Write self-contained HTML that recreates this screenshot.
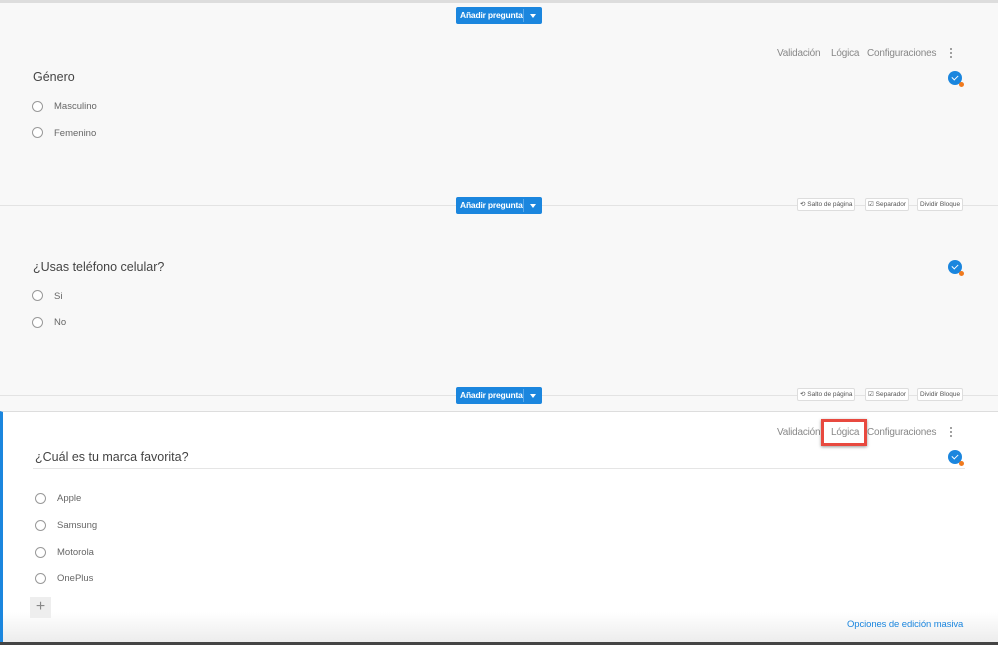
<!DOCTYPE html>
<html><head><meta charset="utf-8"><style>
*{margin:0;padding:0;box-sizing:border-box}
body{width:998px;height:645px;overflow:hidden;background:#f8f8f8;font-family:"Liberation Sans",sans-serif;position:relative;color:#555}
.a{position:absolute;white-space:nowrap}
.btn{position:absolute;height:17px;width:86px;background:#1b86de;border-radius:2px;color:#fff;font-size:8.5px;font-weight:bold;line-height:17px;letter-spacing:-0.2px}
.btn span{position:absolute;left:4px}
.btn i{position:absolute;left:67px;top:2px;bottom:2px;border-left:1px solid #5aa8ea}
.btn b{position:absolute;left:74px;top:7px;border-left:3px solid transparent;border-right:3px solid transparent;border-top:4px solid #fff}
.tabs{font-size:10px;color:#888;letter-spacing:-0.2px}
.title{font-size:12.5px;color:#444}
.radio{position:absolute;width:11px;height:11px;border:1px solid #999;border-radius:50%;background:#fff}
.lab{font-size:9.5px;color:#666}
.chk{position:absolute;width:14px;height:14px;border-radius:50%;background:#1b86de}
.chk:after{content:"";position:absolute;left:4px;top:3.5px;width:5px;height:3px;border-left:1.5px solid #fff;border-bottom:1.5px solid #fff;transform:rotate(-45deg)}
.chk:before{content:"";position:absolute;right:-2px;bottom:-2px;width:5px;height:5px;border-radius:50%;background:#f07a1e;z-index:1}
.dots{position:absolute;width:2px;height:12px;background:radial-gradient(circle,#999 1px,transparent 1.2px) 0 0/2px 4px}
.sm{position:absolute;height:13px;border:1px solid #ddd;background:#fff;font-size:6.5px;color:#555;line-height:11px;padding:0 2px;border-radius:2px}
.hl{position:absolute;left:0;right:0;height:1px;background:#e3e3e3}
</style></head><body>
<div class="a" style="left:0;top:0;width:998px;height:3px;background:#ddd"></div>

<div class="btn" style="left:456px;top:7px"><span>Añadir pregunta</span><i></i><b></b></div>
<div class="a tabs" style="left:777px;top:48px">Validación</div>
<div class="a tabs" style="left:831px;top:48px">Lógica</div>
<div class="a tabs" style="left:867px;top:48px">Configuraciones</div>
<div class="dots" style="left:950px;top:47px"></div>
<div class="a title" style="left:33px;top:70px">Género</div>
<div class="chk" style="left:948px;top:71px"></div>
<div class="radio" style="left:32px;top:101px"></div><div class="a lab" style="left:54px;top:101px">Masculino</div>
<div class="radio" style="left:32px;top:127px"></div><div class="a lab" style="left:54px;top:128px">Femenino</div>

<div class="hl" style="top:205px"></div>
<div class="btn" style="left:456px;top:197px"><span>Añadir pregunta</span><i></i><b></b></div>
<div class="sm" style="left:797px;top:198px">⟲ Salto de página</div>
<div class="sm" style="left:865px;top:198px">☑ Separador</div>
<div class="sm" style="left:917px;top:198px">Dividir Bloque</div>
<div class="a title" style="left:33px;top:260px">¿Usas teléfono celular?</div>
<div class="chk" style="left:948px;top:260px"></div>
<div class="radio" style="left:32px;top:290px"></div><div class="a lab" style="left:54px;top:291px">Si</div>
<div class="radio" style="left:32px;top:317px"></div><div class="a lab" style="left:54px;top:317px">No</div>

<div class="hl" style="top:395px"></div>
<div class="btn" style="left:456px;top:387px"><span>Añadir pregunta</span><i></i><b></b></div>
<div class="sm" style="left:797px;top:388px">⟲ Salto de página</div>
<div class="sm" style="left:865px;top:388px">☑ Separador</div>
<div class="sm" style="left:917px;top:388px">Dividir Bloque</div>

<div class="a" style="left:0;top:411px;width:998px;height:234px;background:linear-gradient(#fff 0,#fff 200px,#ececec 231px);border-top:1px solid #ddd;border-left:3px solid #1b86de"></div>
<div class="a" style="left:0;top:642px;width:998px;height:3px;background:#444"></div>
<div class="a tabs" style="left:777px;top:427px">Validación</div>
<div class="a" style="left:821px;top:419px;width:46px;height:27px;border:3px solid #e8493f;box-shadow:0 1px 3px rgba(0,0,0,.4);background:#fff"></div>
<div class="a tabs" style="left:831px;top:427px">Lógica</div>
<div class="a tabs" style="left:867px;top:427px">Configuraciones</div>
<div class="dots" style="left:950px;top:426px"></div>
<div class="a title" style="left:35px;top:450px">¿Cuál es tu marca favorita?</div>
<div class="a" style="left:33px;top:468px;width:932px;height:1px;background:#e5e5e5"></div>
<div class="chk" style="left:948px;top:450px"></div>
<div class="radio" style="left:35px;top:493px"></div><div class="a lab" style="left:57px;top:493px">Apple</div>
<div class="radio" style="left:35px;top:520px"></div><div class="a lab" style="left:57px;top:520px">Samsung</div>
<div class="radio" style="left:35px;top:547px"></div><div class="a lab" style="left:57px;top:547px">Motorola</div>
<div class="radio" style="left:35px;top:573px"></div><div class="a lab" style="left:57px;top:573px">OnePlus</div>
<div class="a" style="left:30px;top:597px;width:21px;height:21px;background:#eee;color:#888;font-size:16px;text-align:center;line-height:20px">+</div>
<div class="a" style="left:847px;top:619px;font-size:9.5px;color:#1b86de;letter-spacing:-0.1px">Opciones de edición masiva</div>
</body></html>
